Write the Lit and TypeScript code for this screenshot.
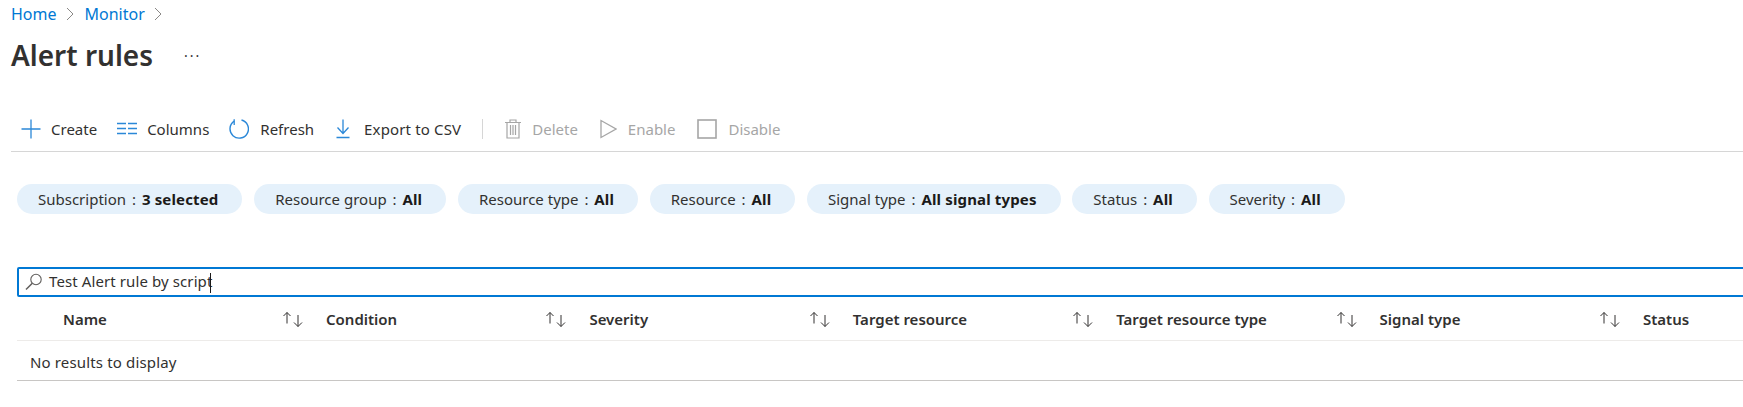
import { LitElement, html, css, svg } from "lit";
import { customElement } from "lit/decorators.js";

const pills: [string, string][] = [
  ["Subscription", "3 selected"],
  ["Resource group", "All"],
  ["Resource type", "All"],
  ["Resource", "All"],
  ["Signal type", "All signal types"],
  ["Status", "All"],
  ["Severity", "All"],
];
const cols = ["Name", "Condition", "Severity", "Target resource", "Target resource type", "Signal type", "Status"];

const ico = (w: number, h: number, body: unknown) =>
  html`<svg class="ico" width=${w} height=${h} viewBox="0 0 ${w} ${h}" fill="none">${body}</svg>`;

const icons = {
  plus: ico(20, 20, svg`<path d="M10 0.5V19.5M0.5 10H19.5" stroke="#2b88d8" stroke-width="1.3"/>`),
  cols: ico(20, 20, svg`<path d="M0 4.5H9M11 4.5H20M0 9.5H9M11 9.5H20M0 14.5H9M11 14.5H20" stroke="#2b88d8" stroke-width="1.3"/>`),
  refresh: ico(20, 20, svg`<path d="M12.5 1A9.2 9.2 0 1 1 5.2 2.2" stroke="#2b88d8" stroke-width="1.4"/><path d="M5.2 0.2V6" stroke="#2b88d8" stroke-width="1.3"/>`),
  exp: ico(14, 20, svg`<path d="M7 0.5V14M1.5 8.5L7 14.5L12.5 8.5M0.5 18.5H13.5" stroke="#2b88d8" stroke-width="1.3"/>`),
  del: ico(16, 20, svg`<path d="M0 3.5H16M5 3.5V1H11V3.5M2 3.5V19H14V3.5M5.5 6V16M8 6V16M10.5 6V16" stroke="#a6a6a6" stroke-width="1.2"/>`),
  play: ico(17, 20, svg`<path d="M1 1.5V18.5L16 10Z" stroke="#a6a6a6" stroke-width="1.3"/>`),
  box: ico(20, 20, svg`<rect x="1" y="1" width="18" height="18" stroke="#a6a6a6" stroke-width="1.6"/>`),
  search: ico(18, 18, svg`<circle cx="11" cy="6.5" r="5.2" stroke="#605e5c" stroke-width="1.1"/><path d="M7.3 10.3L1 16.5" stroke="#605e5c" stroke-width="1.5"/>`),
  sort: ico(21, 16, svg`<path d="M5 12.5V1.5M1.5 5L5 1.5L8.5 5" stroke="#323130" stroke-width="1"/><path d="M16 4V15.5M12 11.5L16 15.5L20 11.5" stroke="#323130" stroke-width="1"/>`),
  chev: ico(8, 14, svg`<path d="M1 1L7 7L1 13" stroke="#8a8886" stroke-width="1"/>`),
};

@customElement("app-root")
export class AppRoot extends LitElement {
  static styles = css`
    :host {
      display: block;
      width: 1743px;
      height: 407px;
      overflow: hidden;
      background: #fff;
      font-family: "Noto Sans", "Open Sans", sans-serif;
      font-size: 15px;
      color: #323130;
    }
    .ico { flex: none; display: block; }
    .crumbs {
      display: flex; align-items: center; height: 28px;
      padding-left: 11px; font-size: 16px; color: #0078d4;
    }
    .crumbs a { color: inherit; text-decoration: none; }
    .crumbs .ico { margin: 0 11px 0 9px; }
    .title-row {
      display: flex; align-items: center; height: 54px; padding-left: 11px;
    }
    h1 { margin: 0; font-size: 28px; font-weight: 600; line-height: 1; color: #323130; }
    .more { margin-left: 31px; font-size: 14px; letter-spacing: 2px; color: #323130; }
    .toolbar {
      display: flex; align-items: center; height: 44px;
      margin: 25px 0 0 11px; padding-left: 10px;
      border-bottom: 1px solid #d6d6d6;
    }
    .tb { display: flex; align-items: center; gap: 10px; margin-right: 20px; white-space: nowrap; }
    .tb.refresh { gap: 11px; }
    .tb.export { margin-left: 2px; gap: 14px; letter-spacing: 0.15px; }
    .tb.off { color: #a6a6a6; gap: 11px; margin-right: 22px; }
    .sep { width: 1px; height: 20px; background: #d6d6d6; margin: 0 22px 0 1px; }
    .pills { display: flex; gap: 11.7px; margin: 32px 0 0 17px; }
    .pill {
      height: 30px; display: flex; align-items: center; padding: 0 24px 0 21px;
      background: #e5f1fb; border-radius: 15px; white-space: pre; color: #323130;
    }
    .pill .colon { margin: 0 2px; }
    .pill b { font-weight: 700; color: #1b1a19; letter-spacing: 0.15px; }
    .search {
      box-sizing: border-box; height: 30px; margin: 53px 0 0 17px; width: 1760px;
      border: 2px solid #0078d4; border-radius: 2px;
      display: flex; align-items: center; padding-left: 6px; gap: 6px; white-space: nowrap;
      letter-spacing: 0.1px;
    }
    .caret { display: inline-block; width: 1px; height: 20px; background: #1b1a19; vertical-align: middle; margin-left: -2px; }
    .thead {
      display: grid; grid-template-columns: 309px repeat(6, 263.4px);
      margin-left: 17px; height: 43px; align-items: center;
      border-bottom: 1px solid #edebe9; font-weight: 600; white-space: nowrap;
    }
    .th { display: flex; align-items: center; justify-content: space-between; padding-right: 23px; }
    .th:first-child { padding-left: 46px; }
    .empty {
      margin-left: 17px; height: 40px; padding: 2px 0 0 13px; box-sizing: border-box;
      display: flex; align-items: center; letter-spacing: 0.15px;
      border-bottom: 1px solid #c8c6c4;
    }
  `;

  render() {
    return html`
      <nav class="crumbs"><a>Home</a>${icons.chev}<a>Monitor</a>${icons.chev}</nav>
      <div class="title-row"><h1>Alert rules</h1><span class="more">···</span></div>
      <div class="toolbar">
        <div class="tb">${icons.plus}Create</div>
        <div class="tb">${icons.cols}Columns</div>
        <div class="tb refresh">${icons.refresh}Refresh</div>
        <div class="tb export">${icons.exp}Export to CSV</div>
        <div class="sep"></div>
        <div class="tb off">${icons.del}Delete</div>
        <div class="tb off">${icons.play}Enable</div>
        <div class="tb off">${icons.box}Disable</div>
      </div>
      <div class="pills">
        ${pills.map(([k, v]) => html`<div class="pill"><span>${k} <span class="colon">:</span> <b>${v}</b></span></div>`)}
      </div>
      <div class="search">${icons.search}<span>Test Alert rule by script<span class="caret"></span></span></div>
      <div class="thead">
        ${cols.map((c) => html`<div class="th"><span>${c}</span>${icons.sort}</div>`)}
      </div>
      <div class="empty">No results to display</div>
    `;
  }
}
